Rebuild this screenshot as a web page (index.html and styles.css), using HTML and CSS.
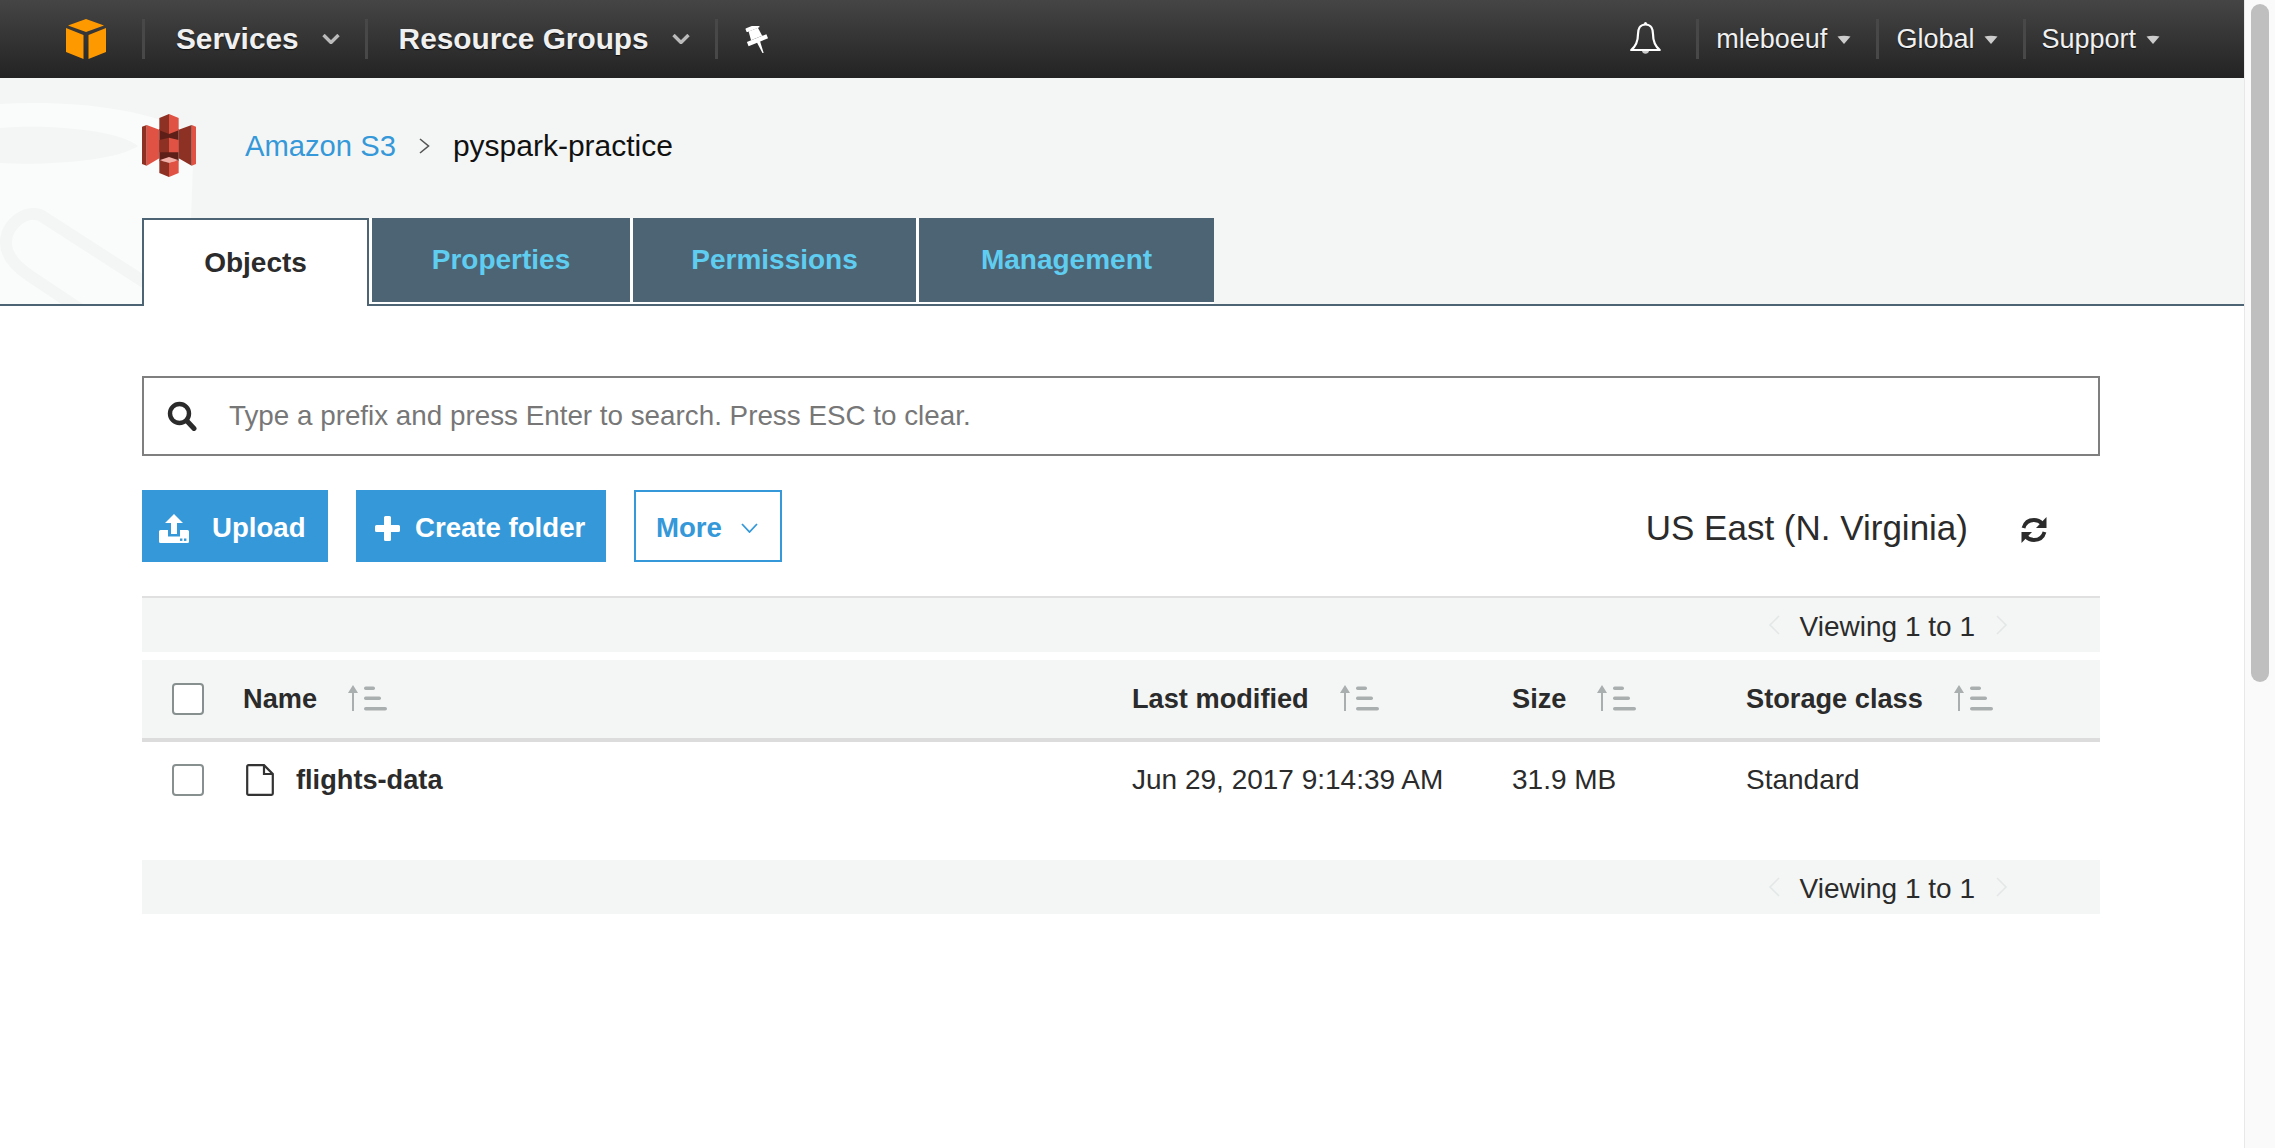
FILE: index.html
```html
<!DOCTYPE html>
<html lang="en">
<head>
    <meta charset="UTF-8">
    <title>S3 Management Console</title>
    <link rel="stylesheet" href="styles.css">
</head>
<body>
    <div class="page">
        <header class="topbar">
            <svg class="aws-logo" viewBox="0 0 40 40">
                <polygon points="20,0 38,6.5 20,13 2,6.5" fill="#f90"/>
                <polygon points="0,9 17.5,16 17.5,40 0,33" fill="#f90"/>
                <polygon points="40,9 22.5,16 22.5,40 40,33" fill="#f90"/>
            </svg>
            <div class="nav-item nav-main">Services
                <svg class="nav-chevron" viewBox="0 0 18 10"><path d="M1.5 1 L9 8.5 L16.5 1" fill="none" stroke="#bbb" stroke-width="3.4"/></svg>
            </div>
            <div class="nav-item nav-main">Resource Groups
                <svg class="nav-chevron" viewBox="0 0 18 10"><path d="M1.5 1 L9 8.5 L16.5 1" fill="none" stroke="#bbb" stroke-width="3.4"/></svg>
            </div>
            <div class="nav-item nav-pin">
                <svg class="pin-icon" viewBox="0 0 24 27">
                    <g transform="rotate(-22 12 13)" fill="#fff">
                        <rect x="5" y="-1" width="14" height="4" rx="1"/>
                        <polygon points="7,3 17,3 18,12 6,12"/>
                        <polygon points="1.5,12 22.5,12 22.5,16.5 1.5,16.5"/>
                        <polygon points="10.6,16 14,16 12.8,30 12,30"/>
                    </g>
                </svg>
            </div>
            <div class="nav-right">
                <svg class="bell-icon" viewBox="0 0 31 34">
                    <path d="M15.5 2.5 C9.5 2.5 8 7.5 8 12 C8 20 5.5 24.5 1.2 28 L29.8 28 C25.5 24.5 23 20 23 12 C23 7.5 21.5 2.5 15.5 2.5 Z" fill="none" stroke="#fff" stroke-width="2.2" stroke-linejoin="round"/>
                    <path d="M12 29 a3.6 3.6 0 0 0 7 0 Z" fill="#ccc"/>
                    <circle cx="15.5" cy="1.6" r="1.5" fill="#fff"/>
                </svg>
                <div class="nav-item nav-sub nav-user">mleboeuf
                    <svg class="nav-caret" viewBox="0 0 14 9"><path d="M0.5 1.5 Q7 0 13.5 1.5 L7 9 Z" fill="#ccc"/></svg>
                </div>
                <div class="nav-item nav-sub nav-region">Global
                    <svg class="nav-caret" viewBox="0 0 14 9"><path d="M0.5 1.5 Q7 0 13.5 1.5 L7 9 Z" fill="#ccc"/></svg>
                </div>
                <div class="nav-item nav-sub nav-support">Support
                    <svg class="nav-caret" viewBox="0 0 14 9"><path d="M0.5 1.5 Q7 0 13.5 1.5 L7 9 Z" fill="#ccc"/></svg>
                </div>
            </div>
        </header>

        <section class="subhead">
            <svg class="watermark" viewBox="0 78 200 226">
                <path d="M0 104 C70 100 150 108 194 135 L188 304 L0 304 Z" fill="#fafbfb"/>
                <path d="M0 128 C50 124 118 130 138 146 C118 160 50 166 0 163 Z" fill="#f4f6f5"/>
                <path d="M200 320 L45 220 C30 208 5 225 6 245 C6 258 15 268 30 278 L90 318" fill="none" stroke="#f4f6f5" stroke-width="12" transform="translate(0 -2)"/>
            </svg>
            <div class="crumbs">
                <svg class="s3-logo" viewBox="306 343 162 189">
                    <polygon points="306,381 320,376 320,498 306,493" fill="#8c3123"/>
                    <polygon points="320,376 358,390 358,476 320,498" fill="#e05243"/>
                    <polygon points="468,381 455,376 455,498 468,493" fill="#e05243"/>
                    <polygon points="455,376 416,390 416,476 455,498" fill="#8c3123"/>
                    <rect x="358" y="388" width="58" height="96" fill="#5e1f18"/>
                    <polygon points="387,343 358,355 358,392 387,403" fill="#8c3123"/>
                    <polygon points="387,343 416,355 416,392 387,403" fill="#e05243"/>
                    <polygon points="358,421 387,414 387,458 358,458" fill="#8c3123"/>
                    <polygon points="416,421 387,414 387,458 416,458" fill="#e05243"/>
                    <polygon points="358,482 387,472 416,482 387,489" fill="#f2b0a9"/>
                    <polygon points="358,482 387,489 387,532 358,520" fill="#8c3123"/>
                    <polygon points="416,482 387,489 387,532 416,520" fill="#e05243"/>
                </svg>
                <a class="crumb-link">Amazon S3</a>
                <svg class="crumb-sep" viewBox="0 0 11 16"><path d="M1 1 L9.5 8 L1 15" fill="none" stroke="#555" stroke-width="1.6"/></svg>
                <span class="crumb-current">pyspark-practice</span>
            </div>
            <nav class="tabs">
                <div class="tab tab-active">Objects</div>
                <div class="tab tab-properties">Properties</div>
                <div class="tab tab-permissions">Permissions</div>
                <div class="tab tab-management">Management</div>
            </nav>
        </section>

        <main class="content">
            <div class="search">
                <svg class="search-icon" viewBox="0 0 30 30">
                    <circle cx="12.5" cy="12.5" r="9.5" fill="none" stroke="#2b2b2b" stroke-width="4.4"/>
                    <path d="M19.5 19.5 L27 27.5" stroke="#2b2b2b" stroke-width="5" stroke-linecap="round"/>
                </svg>
                <span class="search-text">Type a prefix and press Enter to search. Press ESC to clear.</span>
            </div>

            <div class="toolbar">
                <button class="btn btn-upload">
                    <svg class="upload-icon" viewBox="0 0 30 29">
                        <polygon points="15,0 24,9 18,9 18,20 12,20 12,9 6,9" fill="#fff"/>
                        <path d="M1.5 16 L9 16 L9 22.5 L21 22.5 L21 16 L28.5 16 A1.5 1.5 0 0 1 30 17.5 L30 27.5 A1.5 1.5 0 0 1 28.5 29 L1.5 29 A1.5 1.5 0 0 1 0 27.5 L0 17.5 A1.5 1.5 0 0 1 1.5 16 Z" fill="#fff"/>
                        <rect x="21" y="24.5" width="2.4" height="2.4" fill="#3498d9"/>
                        <rect x="25" y="24.5" width="2.4" height="2.4" fill="#3498d9"/>
                    </svg>
                    Upload
                </button>
                <button class="btn btn-create">
                    <svg class="plus-icon" viewBox="0 0 25 25"><path d="M9 1.5 A1.5 1.5 0 0 1 10.5 0 L14.5 0 A1.5 1.5 0 0 1 16 1.5 L16 9 L23.5 9 A1.5 1.5 0 0 1 25 10.5 L25 14.5 A1.5 1.5 0 0 1 23.5 16 L16 16 L16 23.5 A1.5 1.5 0 0 1 14.5 25 L10.5 25 A1.5 1.5 0 0 1 9 23.5 L9 16 L1.5 16 A1.5 1.5 0 0 1 0 14.5 L0 10.5 A1.5 1.5 0 0 1 1.5 9 L9 9 Z" fill="#fff"/></svg>
                    Create folder
                </button>
                <button class="btn btn-more">More
                    <svg class="more-chevron" viewBox="0 0 17 10"><path d="M1 1 L8.5 9 L16 1" fill="none" stroke="#3498d9" stroke-width="1.8"/></svg>
                </button>
                <div class="region">US East (N. Virginia)</div>
                <svg class="refresh-icon" viewBox="0 0 28 26">
                    <path d="M3.5 11 C5 5.5 9 3 14 3 C17.5 3 20 4.2 22 6.4" fill="none" stroke="#2b2b2b" stroke-width="3.8"/>
                    <polygon points="26.5,0 26.5,11 16,11" fill="#2b2b2b"/>
                    <path d="M24.5 15 C23 20.5 19 23 14 23 C10.5 23 8 21.8 6 19.6" fill="none" stroke="#2b2b2b" stroke-width="3.8"/>
                    <polygon points="1.5,26 1.5,15 12,15" fill="#2b2b2b"/>
                </svg>
            </div>

            <div class="pager pager-top">
                <svg class="pager-arrow" viewBox="0 0 12 20"><path d="M11 1 L2 10 L11 19" fill="none" stroke="#e3e7e7" stroke-width="1.6"/></svg>
                <span class="pager-text">Viewing 1 to 1</span>
                <svg class="pager-arrow" viewBox="0 0 12 20"><path d="M1 1 L10 10 L1 19" fill="none" stroke="#e3e7e7" stroke-width="1.6"/></svg>
            </div>

            <div class="table-row table-head">
                <div class="cell-check"><span class="checkbox"></span></div>
                <div class="cell-name">Name
                    <svg class="sort-icon" viewBox="0 0 41 26"><use href="#sort"/></svg>
                </div>
                <div class="cell-date">Last modified
                    <svg class="sort-icon" viewBox="0 0 41 26"><use href="#sort"/></svg>
                </div>
                <div class="cell-size">Size
                    <svg class="sort-icon" viewBox="0 0 41 26"><use href="#sort"/></svg>
                </div>
                <div class="cell-class">Storage class
                    <svg class="sort-icon" viewBox="0 0 41 26"><use href="#sort"/></svg>
                </div>
            </div>

            <div class="table-row table-body">
                <div class="cell-check"><span class="checkbox"></span></div>
                <div class="cell-name file-name">
                    <svg class="file-icon" viewBox="0 0 28 32">
                        <path d="M1.2 2.5 A1.3 1.3 0 0 1 2.5 1.2 L18 1.2 L26.8 10 L26.8 29.5 A1.3 1.3 0 0 1 25.5 30.8 L2.5 30.8 A1.3 1.3 0 0 1 1.2 29.5 Z" fill="none" stroke="#333" stroke-width="2.2"/>
                        <path d="M18 1.2 L18 10 L26.8 10" fill="none" stroke="#333" stroke-width="2.2"/>
                    </svg>
                    flights-data
                </div>
                <div class="cell-date">Jun 29, 2017 9:14:39 AM</div>
                <div class="cell-size">31.9 MB</div>
                <div class="cell-class">Standard</div>
            </div>

            <div class="pager pager-bottom">
                <svg class="pager-arrow" viewBox="0 0 12 20"><path d="M11 1 L2 10 L11 19" fill="none" stroke="#e3e7e7" stroke-width="1.6"/></svg>
                <span class="pager-text">Viewing 1 to 1</span>
                <svg class="pager-arrow" viewBox="0 0 12 20"><path d="M1 1 L10 10 L1 19" fill="none" stroke="#e3e7e7" stroke-width="1.6"/></svg>
            </div>
        </main>
    </div>

    <div class="scrollbar"><div class="scrollbar-thumb"></div></div>

    <svg class="defs" width="0" height="0">
        <g id="sort">
            <path d="M7 26 L7 3" stroke="#a9aeae" stroke-width="2"/>
            <polygon points="7,0 12,8 2,8" fill="#a9aeae"/>
            <rect x="18" y="1.5" width="11" height="3.4" rx="1.7" fill="#a9aeae"/>
            <rect x="18" y="11.5" width="17" height="3.4" rx="1.7" fill="#a9aeae"/>
            <rect x="18" y="22" width="23" height="3.6" rx="1.8" fill="#a9aeae"/>
        </g>
    </svg>
</body>
</html>
```

FILE: styles.css
```css
:root {
    --panel: #f4f6f5;
    --slate: #4d6475;
    --blue: #3498d9;
    --text: #2b2b2b;
}

* {
    margin: 0;
    padding: 0;
    box-sizing: border-box;
    font-family: "Liberation Sans", Arial, sans-serif;
}

body {
    display: flex;
    height: 1148px;
    overflow: hidden;
    background: #fff;
    color: var(--text);
    font-size: 28px;
}

.page {
    width: 2244px;
    flex: none;
}

.defs {
    position: absolute;
}

/* top bar */
.topbar {
    display: flex;
    align-items: center;
    height: 78px;
    padding-left: 66px;
    background: linear-gradient(#454545, #232323);
    color: #f0f0f0;
    text-shadow: 0 1px 1px rgba(0, 0, 0, 0.7);
}

.aws-logo {
    width: 40px;
    height: 40px;
    margin-right: 36px;
}

.nav-item {
    display: flex;
    align-items: center;
    height: 40px;
    border-left: 3px solid #484848;
}

.nav-main {
    padding: 0 25px 0 31px;
    font-size: 29.8px;
    font-weight: 700;
}

.nav-chevron {
    width: 18px;
    height: 10px;
    margin-left: 23px;
}

.nav-pin {
    padding-left: 27px;
}

.pin-icon {
    width: 24px;
    height: 27px;
}

.nav-right {
    display: flex;
    align-items: center;
    margin-left: auto;
    padding-right: 84px;
}

.bell-icon {
    width: 31px;
    height: 34px;
    margin-right: 35px;
}

.nav-sub {
    font-size: 27px;
}

.nav-user {
    padding: 0 25px 0 17px;
}

.nav-region {
    padding: 0 25px 0 17px;
}

.nav-support {
    padding-left: 15px;
}

.nav-caret {
    width: 14px;
    height: 9px;
    margin-left: 10px;
}

/* breadcrumb and tabs */
.subhead {
    position: relative;
    height: 228px;
    padding: 36px 0 0 142px;
    background: var(--panel);
    border-bottom: 2px solid var(--slate);
}

.watermark {
    position: absolute;
    left: 0;
    top: 0;
    width: 200px;
    height: 226px;
}

.crumbs {
    position: relative;
    display: flex;
    align-items: center;
    height: 63px;
    margin-bottom: 41px;
    font-size: 29.2px;
}

.s3-logo {
    width: 54px;
    height: 63px;
    margin-right: 49px;
}

.crumb-link {
    padding-top: 1px;
    color: var(--blue);
}

.crumb-sep {
    width: 11px;
    height: 16px;
    margin: 0 23px 0 23px;
}

.crumb-current {
    color: #111;
    font-size: 30px;
}

.tabs {
    position: relative;
    display: flex;
    height: 86px;
}

.tab {
    display: flex;
    align-items: center;
    justify-content: center;
    height: 86px;
    background: var(--slate);
    border-left: 3px solid #fff;
    border-bottom: 2px solid #fff;
    color: #5fcdf0;
    font-weight: 700;
    font-size: 28px;
}

.tab-active {
    width: 227px;
    height: 88px;
    background: #fff;
    border: 2px solid var(--slate);
    border-bottom: none;
    color: var(--text);
}

.tab-properties {
    width: 261px;
}

.tab-permissions {
    width: 286px;
}

.tab-management {
    width: 298px;
}

/* content */
.content {
    padding: 70px 144px 0 142px;
}

.search {
    display: flex;
    align-items: center;
    height: 80px;
    padding-left: 23px;
    border: 2px solid #7f7f7f;
}

.search-icon {
    width: 30px;
    height: 30px;
    margin-right: 32px;
}

.search-text {
    color: #777;
    font-size: 27.8px;
}

.toolbar {
    display: flex;
    align-items: center;
    height: 72px;
    margin-top: 34px;
}

.btn {
    display: flex;
    align-items: center;
    height: 72px;
    padding-top: 4px;
    border: none;
    background: var(--blue);
    color: #fff;
    font-size: 27.6px;
    font-weight: 700;
}

.btn-upload {
    width: 186px;
    padding-left: 17px;
}

.upload-icon {
    width: 30px;
    height: 29px;
    margin-right: 23px;
}

.btn-create {
    width: 250px;
    margin-left: 28px;
    padding-left: 19px;
}

.plus-icon {
    width: 25px;
    height: 25px;
    margin-right: 15px;
}

.btn-more {
    width: 148px;
    margin-left: 28px;
    padding-left: 20px;
    background: #fff;
    border: 2px solid var(--blue);
    color: var(--blue);
}

.more-chevron {
    width: 17px;
    height: 10px;
    margin-left: 19px;
}

.region {
    margin-left: auto;
    padding-top: 4px;
    font-size: 35px;
}

.refresh-icon {
    width: 28px;
    height: 26px;
    margin: 8px 52px 0 52px;
}

.pager {
    display: flex;
    align-items: center;
    justify-content: flex-end;
    padding-right: 92px;
    background: var(--panel);
}

.pager-top {
    height: 56px;
    margin-top: 34px;
    border-top: 2px solid #e0e0e0;
}

.pager-bottom {
    height: 54px;
    margin-top: 42px;
}

.pager-arrow {
    width: 12px;
    height: 20px;
}

.pager-text {
    margin: 3px 21px 0 20px;
}

/* table */
.table-row {
    display: grid;
    grid-template-columns: 101px 889px 380px 234px 1fr;
    align-items: center;
}

.table-head {
    height: 82px;
    margin-top: 8px;
    background: var(--panel);
    border-bottom: 4px solid #dcdcdc;
    font-size: 27.2px;
    font-weight: 700;
}

.table-body {
    height: 76px;
}

.cell-check {
    display: flex;
    padding-left: 30px;
}

.checkbox {
    width: 32px;
    height: 32px;
    background: #fff;
    border: 2px solid #87908f;
    border-radius: 4px;
}

.cell-name,
.cell-date,
.cell-size,
.cell-class {
    display: flex;
    align-items: center;
    white-space: nowrap;
}

.sort-icon {
    width: 41px;
    height: 26px;
    margin: -2px 0 0 29px;
}

.file-name {
    font-size: 27.2px;
    font-weight: 700;
}

.file-icon {
    width: 28px;
    height: 32px;
    margin: 0 22px 0 3px;
}

/* fake scrollbar */
.scrollbar {
    width: 31px;
    flex: none;
    height: 100%;
    padding: 4px 6px 0 6px;
    background: #fafafa;
    border-left: 1px solid #e8e8e8;
}

.scrollbar-thumb {
    height: 678px;
    background: #bfbfbf;
    border-radius: 9px;
}
```
